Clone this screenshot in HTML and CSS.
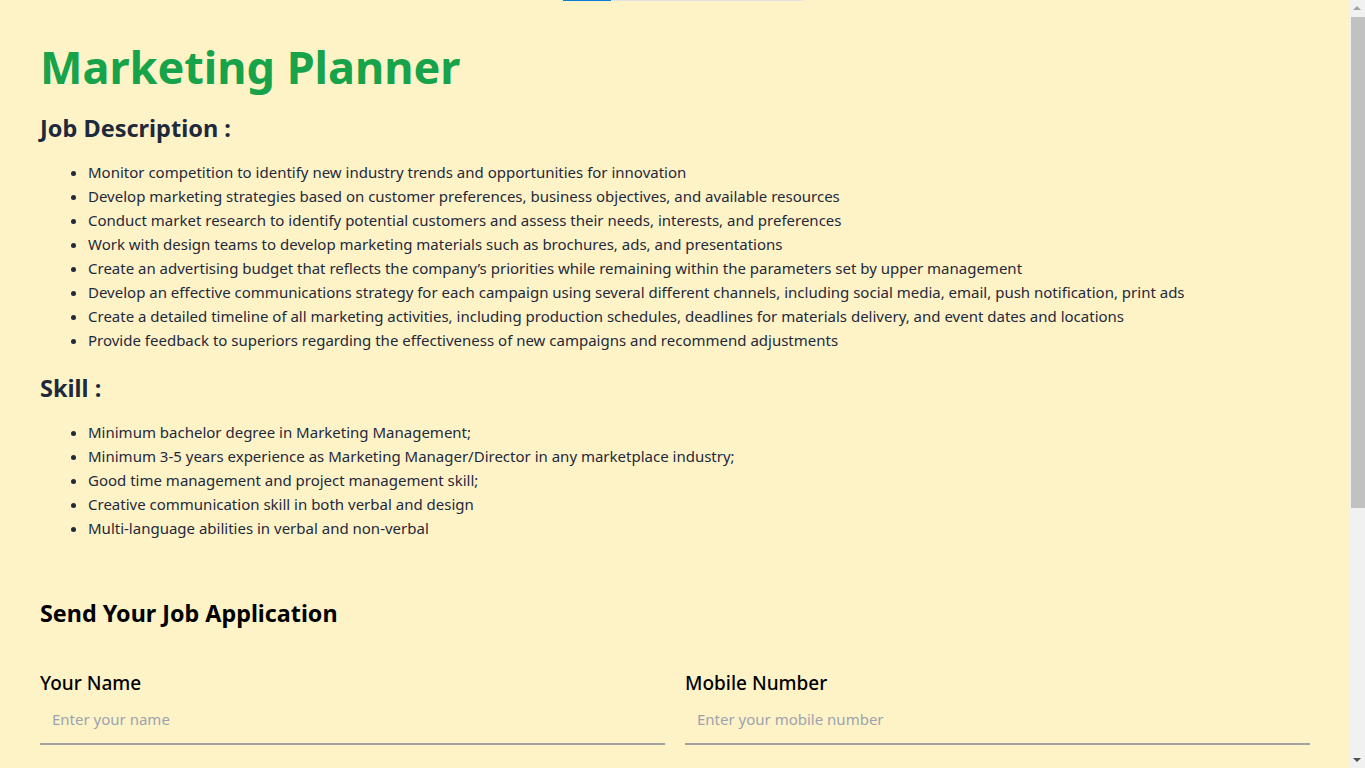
FILE: index.html
```html
<!DOCTYPE html>
<html lang="en">
<head>
<meta charset="utf-8">
<title>Marketing Planner</title>
<link rel="stylesheet" href="styles.css">
</head>
<body>
<div class="progress"><span class="progress-fill"></span></div>
<div class="scrollbar" aria-hidden="true">
  <span class="arrow arrow-up"></span>
  <span class="thumb"></span>
  <span class="arrow arrow-down"></span>
</div>
<main class="page">
  <h1 class="title">Marketing Planner</h1>

  <h2 class="section-title">Job Description :</h2>
  <ul class="list">
    <li>Monitor competition to identify new industry trends and opportunities for innovation</li>
    <li>Develop marketing strategies based on customer preferences, business objectives, and available resources</li>
    <li>Conduct market research to identify potential customers and assess their needs, interests, and preferences</li>
    <li>Work with design teams to develop marketing materials such as brochures, ads, and presentations</li>
    <li>Create an advertising budget that reflects the company’s priorities while remaining within the parameters set by upper management</li>
    <li>Develop an effective communications strategy for each campaign using several different channels, including social media, email, push notification, print ads</li>
    <li>Create a detailed timeline of all marketing activities, including production schedules, deadlines for materials delivery, and event dates and locations</li>
    <li>Provide feedback to superiors regarding the effectiveness of new campaigns and recommend adjustments</li>
  </ul>

  <h2 class="section-title">Skill :</h2>
  <ul class="list">
    <li>Minimum bachelor degree in Marketing Management;</li>
    <li>Minimum 3-5 years experience as Marketing Manager/Director in any marketplace industry;</li>
    <li>Good time management and project management skill;</li>
    <li>Creative communication skill in both verbal and design</li>
    <li>Multi-language abilities in verbal and non-verbal</li>
  </ul>

  <section class="apply">
    <h2 class="apply-title">Send Your Job Application</h2>
    <form class="form">
      <label class="field">
        <span class="field-label">Your Name</span>
        <input class="field-input" type="text" placeholder="Enter your name">
      </label>
      <label class="field">
        <span class="field-label">Mobile Number</span>
        <input class="field-input" type="text" placeholder="Enter your mobile number">
      </label>
      <label class="field">
        <span class="field-label">Email Address</span>
        <input class="field-input" type="text" placeholder="Enter your email address">
      </label>
      <label class="field">
        <span class="field-label">Upload CV</span>
        <input class="field-input" type="text" placeholder="Attach your CV">
      </label>
      <div class="actions">
        <button class="submit" type="button">Apply Now</button>
      </div>
    </form>
  </section>
</main>
</body>
</html>
```
FILE: styles.css
```css
* { box-sizing: border-box; }
html, body { margin: 0; padding: 0; }
body {
  background: #fef3c7;
  font-family: "Noto Sans", "Open Sans", sans-serif;
  color: #1e293b;
}
.progress {
  position: absolute;
  top: 0;
  left: 563px;
  width: 240px;
  height: 1px;
  background: #e2e2e2;
}
.progress-fill {
  display: block;
  width: 48px;
  height: 1px;
  background: #0a7bd6;
}
.scrollbar {
  position: fixed;
  top: 0;
  right: 0;
  width: 15px;
  height: 100vh;
  background: #f1f1f1;
  z-index: 10;
}
.thumb {
  position: absolute;
  top: 17px;
  left: 1px;
  right: 0;
  height: 491px;
  background: #c1c1c1;
}
.arrow {
  position: absolute;
  left: 3px;
  width: 0;
  height: 0;
  border-left: 4px solid transparent;
  border-right: 4px solid transparent;
}
.arrow-up {
  top: 6px;
  border-bottom: 4px solid #a3a3a3;
}
.arrow-down {
  bottom: 6px;
  border-top: 4px solid #505050;
}
.page {
  padding: 37px 55px 60px 40px;
}
.title {
  margin: 0;
  font-size: 45px;
  line-height: 60px;
  font-weight: 700;
  color: #16a34a;
}
.section-title {
  margin: 13px 0 0;
  font-size: 23.5px;
  line-height: 36px;
  font-weight: 700;
  color: #1e293b;
}
.list {
  margin: 14px 0 18px;
  padding-left: 48px;
  font-size: 15px;
  line-height: 24px;
}
.list + .section-title {
  margin-top: 8px;
}
.apply {
  margin-top: 57px;
}
.apply-title {
  margin: 0;
  font-size: 23.3px;
  line-height: 32px;
  font-weight: 700;
  color: #000;
}
.form {
  margin-top: 40px;
  display: grid;
  grid-template-columns: 1fr 1fr;
  column-gap: 20px;
  row-gap: 32px;
}
.field {
  display: flex;
  flex-direction: column;
}
.field-label {
  font-size: 19px;
  line-height: 28px;
  color: #000;
  font-weight: 500;
}
.field-input {
  margin-top: 2px;
  height: 46px;
  padding: 0 12px 4px;
  border: 0;
  border-bottom: 2px solid #a3a3a3;
  background: transparent;
  font-family: inherit;
  font-size: 15px;
  color: #111;
  outline: none;
}
.field-input::placeholder { color: #9ca3af; }
.actions {
  grid-column: 1 / -1;
}
.submit {
  padding: 12px 32px;
  border: 0;
  border-radius: 6px;
  background: #16a34a;
  color: #fff;
  font-family: inherit;
  font-size: 16px;
  font-weight: 700;
}
```
